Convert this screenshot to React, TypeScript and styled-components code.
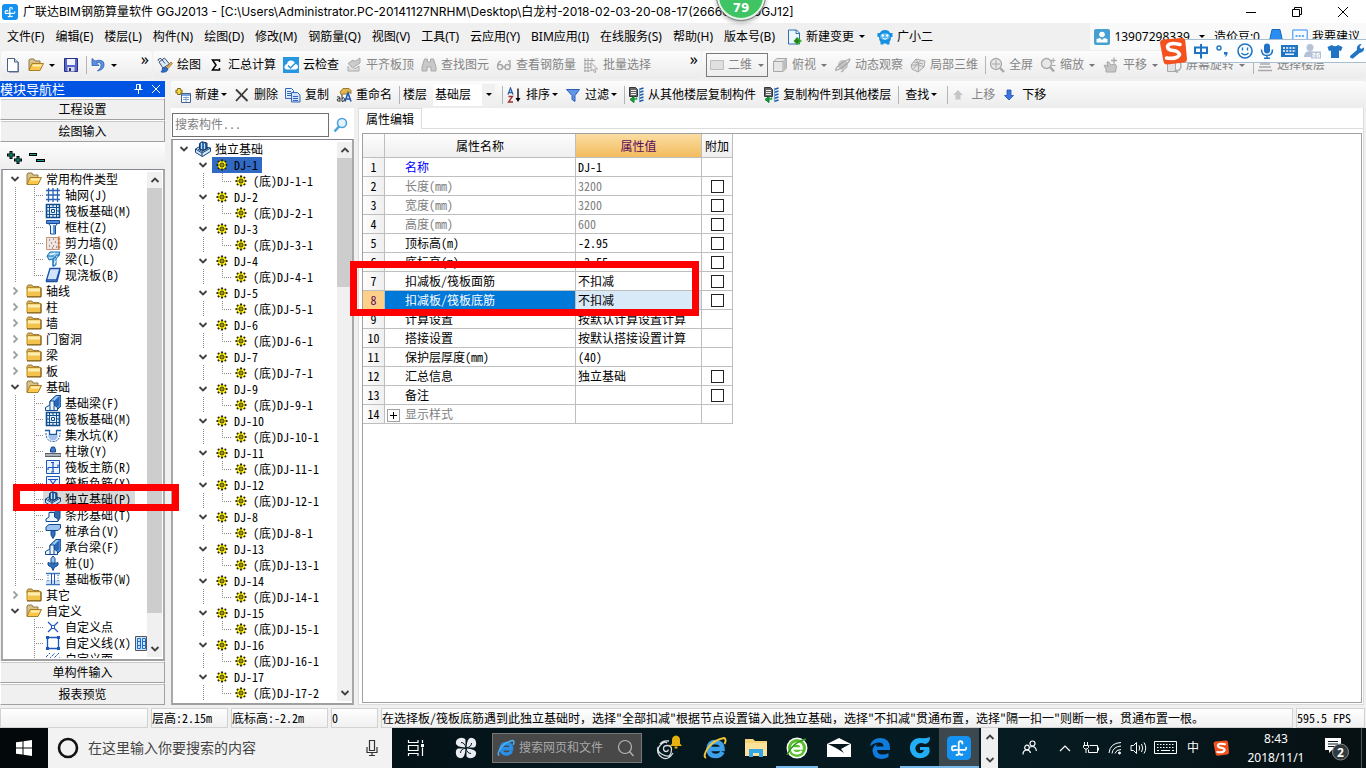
import React from "react";
import styled, { createGlobalStyle, css } from "styled-components";

const ui = `"Noto Sans", "Noto Sans CJK SC", sans-serif`;
const song = `"Noto Sans Mono CJK SC", "Liberation Mono", "Noto Sans CJK SC", monospace`;

const Global = createGlobalStyle`
  * { box-sizing: border-box; }
  body { margin: 0; font: 12px/16px ${ui}; color: #000; background: #f0f0f0; overflow: hidden; }
  button, input, select { font: inherit; color: inherit; }
  button { margin: 0; padding: 0; border: 0; background: none; white-space: nowrap; }
  ul { margin: 0; padding: 0; list-style: none; }
  svg { display: block; flex: none; }
`;

/* ---------- icons ---------- */

const folder = (
  <>
    <path d="M1 3.500 2 2h4l1 1.500h6V6H1z" fill="#d9b45a" stroke="#9c7d3b" />
    <path d="M1 4.500h14v9H1z" fill="#f3c34e" stroke="#b58a2d" />
    <path d="M2 5.500h12v3H2z" fill="#fdeeb4" />
    <path d="M1 14h14V5" stroke="#7a5b1a" fill="none" />
  </>
);
const openFolder = (
  <>
    <path d="M1 13V3l1-1h4l1 2h5v3" fill="#d8c48a" stroke="#8f7b45" />
    <path d="M1 13.500 4 6.500h11.500L12 13.500z" fill="#fbc64a" stroke="#a87f24" />
    <path d="M5 7.500h9l-1 2H4.500z" fill="#fff0b8" />
  </>
);
const beamBlock = (
  <>
    <path d="M5 6 11 .500h5V11l-3 3H5z" fill="#3f86d8" stroke="#12498f" />
    <path d="M9 6 14 1.500V10l-5 4z" fill="#2a68b4" />
    <path d="M6 6 11.500 1H14L9 6z" fill="#a6cdf3" />
    <path d="M.500 15.500v-3L5 10V6h4v4l3.500 2.500v3z" fill="#eaf4fe" stroke="#12498f" />
    <path d="M5 10.500v5M9 10.500v5" stroke="#12498f" />
  </>
);
const raft = (
  <>
    <path d="M1.500 1.500h13v13h-13z" fill="#e9f2fb" stroke="#0f4d8f" strokeWidth="1.600" />
    <path d="M4.500 1v14M11.500 1v14M1 4.500h14M1 11.500h14M8 1v3.500M8 11.500V15M1 8h3.500M11.500 8H15" stroke="#0f4d8f" />
    <path d="M6.500 6.500h3v3h-3z" fill="none" stroke="#0f4d8f" />
  </>
);
const footing = (
  <>
    <path d="M.500 8l5-3 10 2v3.500l-8 5-7-4z" fill="#d2e5f7" stroke="#15457e" />
    <path d="M.500 8l6.500 4 8.500-5M7 12v3.500M3 8l4 2.500 6-3.500" fill="none" stroke="#15457e" />
    <path d="M4.500 2.500 7 .800l5 1.200v5.500L8 9.500 4.500 8z" fill="#2f69ad" stroke="#15325c" />
    <path d="M6.500 2v6M9.500 2.500V8" stroke="#bfe0ff" />
  </>
);
const copyFloor = (
  <>
    <path d="M1.500.500h6l2 2v7h-8z" fill="#666" stroke="#333" />
    <path d="M3 3.500h5M3 5.500h5M3 7.500h5" stroke="#fff" strokeWidth=".9" />
    <path d="M11 2.500 15.500 1M11 5.500 15.500 4M11 8.500 15.500 7M11 11.500l4.500-1.500M11 14.500l4.500-1.500" stroke="#1f5fae" strokeWidth="1.600" />
    <path d="M11.500 2v13" stroke="#6ea6dd" />
    <path d="M6 9.500v6L2 12.500z" fill="#16a33f" stroke="#0c7a2b" />
    <path d="M6 12h2.500v-1.500" stroke="#16a33f" strokeWidth="1.500" fill="none" />
  </>
);
const grey = "#a8a8a8";

const art: Record<string, React.ReactNode> = {
  folder,
  openFolder,
  beamBlock,
  raft,
  footing,
  copyFloor,
  fork: (
    <>
      <rect width="16" height="16" rx="3" fill="#1592f0" />
      <path
        d="M10.300 5Q10.300 3.500 9 3.500T7.800 4.800V11.500Q7.800 13 6.300 12.600M5.800 6.800Q3.200 6.300 3.200 8.200T5 9.300h6.500Q13 9.300 12.800 7.800M10.300 12.300Q9.300 13 8.300 11.800"
        fill="none"
        stroke="#fff"
        strokeWidth="1.200"
        strokeLinecap="round"
      />
    </>
  ),
  doc: (
    <>
      <path d="M2.500 1.500h7l3.500 3.500v9.500H2.500z" fill="#fff" stroke="#4a5f85" />
      <path d="M9.500 1.500V5H13" fill="#cfdcf0" stroke="#4a5f85" />
      <path d="M13.500 5v10H4" fill="none" stroke="#5f7196" />
    </>
  ),
  save: (
    <>
      <path d="M1.500 1.500h13v13h-13z" fill="#5a66c8" stroke="#252f85" />
      <path d="M4 2h8v6H4z" fill="#f1f4ff" />
      <path d="M4.500 10h7v4.500h-7z" fill="#d8dbe8" />
      <path d="M6 11h2v3H6z" fill="#252f85" />
    </>
  ),
  undo: (
    <path d="M2 1.500v7h7L6.500 6Q10 4.500 11 7.500T7.500 14q7-1.500 6.500-7T5 4z" fill="#5b8fe0" stroke="#2a5db5" strokeWidth=".8" />
  ),
  paint: (
    <>
      <path d="M2 5 7.500 1l5 6L6 11z" fill="#dde9f7" stroke="#3b5378" />
      <path d="M1 4q0-3 3-2.500l4 5" fill="none" stroke="#3b5378" />
      <path d="M9 11l5-6 1.500 1.500L10.500 12z" fill="#e9b64b" stroke="#8d641c" strokeWidth=".7" />
      <path d="M5.500 11q4-1.500 5.500 1-1 4-7 3 1.500-1.500 1.500-4z" fill="#2f6fd0" stroke="#183f88" strokeWidth=".7" />
    </>
  ),
  sigma: <path d="M11.500 5V3H4.500L8 8l-3.500 5h7v-2" fill="none" stroke="#000" strokeWidth="1.500" />,
  cloudCheck: (
    <>
      <rect width="16" height="16" fill="#2796e0" />
      <path d="M4 12.500q-3-.5-2.500-3T4 7q.5-3.500 4-3.500T12 7q3 .3 3 2.700t-2.500 2.800z" fill="#fff" />
      <path d="M5 8.500 7.500 11l4.500-4.500" fill="none" stroke="#2796e0" strokeWidth="1.500" />
    </>
  ),
  slab: (
    <>
      <path d="M2 6.500 7 3l2 1.500 5-3.500v5L8 10v2l-2 1v-3z" fill="#ccc" stroke={grey} />
      <path d="M2 9v5h11V9l-4 3" fill="#ddd" stroke={grey} />
    </>
  ),
  binoculars: (
    <path d="M3.500 2h3v3h3V2h3l2.500 8v4h-5v-4h-4v4H1v-4z" fill="#c9c9c9" stroke={grey} />
  ),
  glasses: (
    <g fill="none" stroke={grey} strokeWidth="1.400">
      <circle cx="4" cy="10" r="2.500" />
      <circle cx="11.500" cy="10" r="2.500" />
      <path d="M1.500 9Q2 5 5 4M6.500 10H9M14 10V4h-2" />
    </g>
  ),
  batch: (
    <>
      <path d="M2 1v14M5 1v14M1 3.500h11M1 7h7M1 10.500h7M1 14h6M9 1v4" stroke={grey} fill="none" />
      <path d="M8 5.500 14.500 12l-3 .2L13 15l-1.500.5L10 12.500 8 14z" fill="#f0f0f0" stroke={grey} />
    </>
  ),
  plane: <path d="M1.500 3.500h13v9h-13z" fill="#e0e0e0" stroke="#bdbdbd" />,
  cube: (
    <>
      <path d="M1.500 4.500 5 1.500h9.500v9.500L11 14.500H1.500z" fill="#e6e6e6" stroke={grey} />
      <path d="M1.500 4.500H11v10M11 4.500l3.500-3" fill="none" stroke={grey} />
      <path d="M11.500 5l3-2.500V11l-3 3z" fill="#bdbdbd" />
    </>
  ),
  planet: (
    <>
      <circle cx="8" cy="8" r="5" fill="#c4c4c4" />
      <path d="M1 13.500q-1-2 4-6T14.500 2q1.500 1-3.500 5.500T1 13.500zM6 15l3-2" fill="none" stroke={grey} strokeWidth="1.300" />
    </>
  ),
  wire: (
    <path d="M1 8 6 2l9 2-1 6-6 5-6-3zM6 2l3 6 5 2M1 8l8 0-1 7M4 5l9 2M3.500 11.500 11 3" fill="#e2e2e2" stroke={grey} />
  ),
  fit: (
    <>
      <circle cx="7" cy="7" r="5.500" fill="#e8e8e8" stroke={grey} strokeWidth="1.300" />
      <path d="M7 3v8M3 7h8" stroke={grey} />
      <path d="m11 11 4 4" stroke={grey} strokeWidth="2.400" />
    </>
  ),
  zoom: (
    <>
      <circle cx="6.500" cy="6.500" r="5" fill="#e8e8e8" stroke={grey} strokeWidth="1.300" />
      <path d="m10 10 4 4.500" stroke={grey} strokeWidth="2.400" />
      <path d="M11 3.500h4.500M13.200 1v5M11.500 8.500h4" stroke={grey} />
    </>
  ),
  pan: (
    <>
      <path d="M3 15v-3L1 8.500l2-.5 2 2-1-5h2l1.500 3L12 7l1.500 2-1 6z" fill="#c6c6c6" stroke={grey} />
      <path d="M11 .500v6M8 3.500h6" stroke={grey} strokeWidth="1.300" />
    </>
  ),
  rotate: (
    <>
      <path d="M1.500 1.500h8v13h-8z" fill="#e2e2e2" stroke={grey} />
      <path d="M11 4q4 0 4 5t-6 5l1-2M9 14l3 1.500" fill="none" stroke={grey} strokeWidth="1.400" />
    </>
  ),
  floors: <path d="M4 4h9M3 7h10M2 10h12M1 13.500h14M4 1.500h9" stroke={grey} strokeWidth="1.400" />,
  create: (
    <>
      <path d="M6.500 6.500h9v9h-9z" fill="#fff" stroke="#41618f" />
      <path d="M7 7h8v2H7z" fill="#7ba3dc" />
      <path d="M8 10.500h6M8 12.500h6M11 9.500V15" stroke="#7ba3dc" />
      <path d="M4 1v7M.500 4.500h7" stroke="#7c6500" strokeWidth="3.400" />
      <path d="M4 2v5M1.500 4.500h5" stroke="#f6d64a" strokeWidth="2" />
    </>
  ),
  cross: <path d="M2 2.500 13.500 14M13.500 1.500 2 14" stroke="#3b3b3b" strokeWidth="1.800" />,
  copy: (
    <>
      <path d="M.500 1.500h6l2 2v8h-8z" fill="#e3eeff" stroke="#3565b5" />
      <path d="M2 4.500h4M2 6.500h4M2 8.500h4" stroke="#3565b5" />
      <path d="M6.500 5.500h6l2.500 2.500v7H6.500z" fill="#cfe0fb" stroke="#3565b5" />
      <path d="M8 9.500h5M8 11.500h5M8 13.500h5" stroke="#3565b5" />
    </>
  ),
  rename: (
    <>
      <path d="M4 5 7 1.500h6l2 2v3l-2-1-2 1.500H7L5.500 8z" fill="#e6b54a" stroke="#80611c" strokeWidth=".8" />
      <path d="M9 14.500 12 6l3 8.500M10 12h4" fill="none" stroke="#2359b5" strokeWidth="1.600" />
      <path d="M1 10q3-1 3 1v3.500M4 11.500q-3 0-3 1.500t3 1M6 8v6.500q3 0 2.500-2.500T6 11.500" fill="none" stroke="#333" />
    </>
  ),
  sort: (
    <>
      <path d="M2 7.500 4.500 1 7 7.500M3 5.500h3" fill="none" stroke="#2b62a6" strokeWidth="1.300" />
      <path d="M2.500 9.500H6.500L2.500 15h4.500" fill="none" stroke="#a03030" strokeWidth="1.300" />
      <path d="M12 1.500V13" stroke="#000" strokeWidth="1.300" />
      <path d="M9.500 11h5L12 15z" fill="#000" />
    </>
  ),
  filter: <path d="M1.500 2.500h13L10 8.500v6l-3-2v-4z" fill="#5f97e8" stroke="#2c5eb5" />,
  up: <path d="M7 3 12 8H9.500v4.500h-5V8H2z" fill="#c6c6c6" />,
  down: <path d="M7 13 2.500 8.500h2.500V3h4v5.500h2.500z" fill="#3f74dd" stroke="#2250ae" strokeWidth=".8" />,
  change: (
    <>
      <path d="M2.500 1h8l3 3v11h-11z" fill="#eef6ff" stroke="#2d6fae" />
      <path d="M10 1v3.500h3.500" fill="none" stroke="#2d6fae" />
      <path d="M11 8l5 4-5 4-3.500-4z" fill="#3aae2a" />
      <path d="M11 9.500v5M8.500 12h5" stroke="#1e7c15" strokeWidth="1.500" />
    </>
  ),
  mascot: (
    <>
      <path d="M3 4q1-3 5-3t5 3h2.500v4H14q0 3-1.500 5v2.500h-3v-1h-3v1h-3V13Q2 11 2 8H.500V4z" fill="#1590e0" />
      <ellipse cx="8" cy="7.500" rx="5" ry="3.500" fill="#59b8f2" />
      <circle cx="5.800" cy="6.500" r="1.300" fill="#fff" />
      <circle cx="10.200" cy="6.500" r="1.300" fill="#fff" />
      <path d="M5.500 9q2.500 2.500 5 0" stroke="#fff" fill="none" />
    </>
  ),
  user: (
    <>
      <rect width="16" height="16" rx="2" fill="#46a0d2" />
      <circle cx="8" cy="5.500" r="2.800" fill="#fff" />
      <path d="M2.500 13.500V10L6 9l2 2 2-2 3.500 1v3.500z" fill="#fff" />
    </>
  ),
  bell: <path d="M4 .500h8l2 9 1.500 3H.500l1.500-3z" fill="#2b8df2" stroke="#1668bb" />,
  chat: (
    <>
      <path d="M.800 1h14.400v12H.800z" fill="#f7fbff" stroke="#2b8df2" />
      <path d="M3.500 7h9" stroke="#2b8df2" strokeWidth="1.600" strokeDasharray="2 1.200" />
    </>
  ),
  grid: <path d="M3.500 1v14M8 1v14M12.500 1v14M1 3.500h14M1 8h14M1 12.500h14" stroke="#2c62b8" strokeWidth="1.300" />,
  column: (
    <>
      <path d="M1.500 1.500h13v3h-13z" fill="#4f8ddc" stroke="#164b99" />
      <path d="M3.500 4.500h9l-2 2.500v8h-5V7z" fill="#eaf4fe" stroke="#164b99" />
      <path d="M9 6v9" stroke="#5d97dd" strokeWidth="2" />
    </>
  ),
  wall: (
    <>
      <path d="M1.500 2.500h12v12h-12z" fill="#eee3df" stroke="#c9947a" />
      <path d="M4 5h1M8 4h1M6 8h1M10 7h1M4 11h1M8 11h1M11 12h1M7 13h1" stroke="#555" strokeWidth="1.200" />
      <path d="M14 1v14M12.500 4h3M12.500 8h3M12.500 12h3" stroke="#c96a2a" />
    </>
  ),
  beam: (
    <>
      <path d="M2 5 5 1h10l-1.500 4-2.500 3v6l-3 1.500V8L4 9z" fill="#9fd2f2" stroke="#1470b8" />
      <path d="M8 8l3.500-4H15M8 15V8l3-2M2 5h7" fill="none" stroke="#1470b8" />
      <path d="M5 4l5-2M9 13l2-3" stroke="#fff" />
    </>
  ),
  castSlab: (
    <>
      <path d="M5 1.500h10L11.500 13H1.500z" fill="#cfe4fb" stroke="#1a4fa8" strokeWidth="1.300" />
      <path d="M1.500 13v1.500h10.500L15 3" fill="none" stroke="#1a4fa8" strokeWidth="1.300" />
    </>
  ),
  pit: (
    <>
      <path d="M1 6q0 8.500 7 8.500T15 6" fill="none" stroke="#1d58a8" strokeDasharray="2 1" />
      <path d="M3 8.500h10q-1 5-5 5t-5-5z" fill="#9fc3ea" />
      <path d="M0 3.500h4.500v4h7v-4H16" fill="none" stroke="#1d58a8" strokeWidth="1.300" />
    </>
  ),
  pier: (
    <>
      <path d="M5.500 9V7l1-3h3l1 3v2z" fill="#3f7cd0" stroke="#17458c" />
      <path d="M0 10.500h16v3H0z" fill="#a9b1ba" stroke="#596069" />
    </>
  ),
  mainBar: (
    <>
      <path d="M1.500 1.500h13v13h-13z" fill="#eaf3fd" stroke="#1c55bb" />
      <path d="M8 3v10.500M3 8.500V11M3 8.500h10V5.500M6 3.500h3M6 13h3" fill="none" stroke="#1c55bb" strokeWidth="1.200" />
    </>
  ),
  negBar: (
    <>
      <path d="M1.500 1.500h13v13h-13z" fill="#eaf3fd" stroke="#1c55bb" />
      <path d="M3 4.500h10M5 4.500 8 9l3-4.500M8 9v5" fill="none" stroke="#1c55bb" strokeWidth="1.200" />
    </>
  ),
  strip: (
    <>
      <path d="M5 5.500 8 2h7v9l-2 3z" fill="#2f69ad" stroke="#12498f" />
      <path d="M1 14.500V12l3-2V5.500h5.500V10l3.500 2v2.500z" fill="#eaf4fe" stroke="#12498f" />
      <path d="M4.500 5 8 2.500h3L9.500 5z" fill="#a6cdf3" />
    </>
  ),
  cap: (
    <>
      <path d="M1 4l3-2.500h11.500V5L13 7.500H1z" fill="#9cc4ee" stroke="#12498f" />
      <path d="M6 7.500h4V12l-2 3.500L6 12z" fill="#2f6fc0" stroke="#12498f" />
    </>
  ),
  pile: (
    <>
      <path d="M6 3.500 8 1l2 2.500V8h-4z" fill="#9cc4ee" stroke="#12498f" />
      <path d="M3 7.500q5 3 10 0v2.500q-2 2-3.500 2L8 15.500 6.500 12Q5 12 3 10z" fill="#2f6fc0" stroke="#12498f" />
    </>
  ),
  band: (
    <>
      <path d="M1 2.500h14M1 13.500h14" stroke="#3f74b8" strokeWidth="1.600" />
      <path d="M1 9h14v3.500H1z" fill="#c9def4" />
      <path d="M6.500 3v10M9.500 3v10" stroke="#1c55bb" />
      <path d="M3 4v7M13 4v7" stroke="#1c55bb" strokeDasharray="1 1.500" />
    </>
  ),
  point: (
    <>
      <path d="M3 3l10 10M13 3 3 13" stroke="#1c55bb" strokeWidth="1.200" />
      <path d="M6.500 6.500h3v3h-3z" fill="#fff" stroke="#1c55bb" />
    </>
  ),
  poly: (
    <>
      <path d="M2.500 2.500h11v11h-11z" fill="none" stroke="#1c55bb" strokeWidth="1.300" />
      <path d="M1 1h3v3H1zM12 1h3v3h-3zM1 12h3v3H1zM12 12h3v3h-3z" fill="#1c55bb" />
    </>
  ),
  hatch: <path d="M1 6l4-4M1 11l9-9M1 15 14 2M6 15l9-9M11 15l4-4" stroke="#1c55bb" strokeDasharray="3 1" />,
  gear: (
    <>
      <path d="M8 2.500v11M2.500 8h11M4 4l8 8M12 4l-8 8" stroke="#2f2b00" strokeWidth="2.200" />
      <circle cx="8" cy="8" r="4" fill="#fff200" />
      <path d="M8 3v10M3 8h10" stroke="#2f2b00" strokeWidth=".8" strokeDasharray="2 6" />
      <circle cx="8" cy="8" r="2" fill="none" stroke="#222" />
      <circle cx="8" cy="8" r=".8" fill="#222" />
    </>
  ),
  search: (
    <>
      <circle cx="9" cy="6" r="4.500" fill="#e3f3fd" stroke="#4da3d8" strokeWidth="1.600" />
      <path d="M6 9.500 1.500 14.500" stroke="#4da3d8" strokeWidth="2.600" />
    </>
  ),
};

type IconProps = { name: string; size?: number };
const Icon = ({ name, size = 16 }: IconProps) => (
  <svg width={size} height={size} viewBox="0 0 16 16" fill="none" aria-hidden="true">
    {art[name]}
  </svg>
);

/* ---------- frame ---------- */

const Shell = styled.div`
  display: flex;
  flex-direction: column;
  height: 100vh;
  position: relative;
  overflow: hidden;
`;

const TitleBar = styled.header`
  display: flex;
  align-items: center;
  height: 23px;
  flex: none;
  padding-left: 2px;
  gap: 5px;
  background: #fff;
  h1 { margin: 0; flex: 1; font: 400 12px/16px Inter, ${ui}; white-space: nowrap; }
`;
const WindowButtons = styled.div`
  display: flex;
`;
const WindowButton = styled.button`
  width: 46px;
  height: 23px;
  display: grid;
  place-items: center;
`;

const MenuBar = styled.nav`
  display: flex;
  align-items: center;
  height: 27px;
  flex: none;
  padding-left: 7px;
  gap: 11px;
  background: #f0f0f0;
`;
const MenuButton = styled.button`
  display: flex;
  align-items: center;
  gap: 4px;
`;
const Account = styled.div`
  display: flex;
  align-items: center;
  gap: 8px;
  height: 27px;
  margin-left: auto;
  padding: 0 6px 0 4px;
  background: #f9f9f9;
`;

const Caret = styled.i<{ $dim?: boolean }>`
  width: 0;
  height: 0;
  margin: 0 1px;
  border: 3px solid transparent;
  border-top-color: ${(p) => (p.$dim ? "#777" : "#000")};
  border-bottom-width: 0;
`;
const ToolBand = styled.div<{ $grow?: boolean; $tight?: boolean; $w?: number }>`
  display: flex;
  align-items: center;
  width: ${(p) => (p.$w ? `${p.$w}px` : "auto")};
  height: ${(p) => (p.$tight ? 27 : 28)}px;
  gap: 7px;
  padding-left: 4px;
  flex: ${(p) => (p.$grow ? "1" : "none")};
  min-width: 0;
  border-radius: 3px;
  background: linear-gradient(#fcfcfc, #ececec);
  ${Caret} { margin: ${(p) => (p.$tight ? "0 0 0 -2px" : "0 1px")}; }
`;
const ToolRow = styled.div`
  display: flex;
  height: 31px;
  flex: none;
  padding: 1px 0 2px 1px;
  gap: 1px;
`;
const ToolButton = styled.button<{ $dim?: boolean; $bare?: boolean }>`
  display: flex;
  align-items: center;
  gap: 4px;
  flex: none;
  padding: 0 ${(p) => (p.$bare ? 3 : 0)}px;
  color: ${(p) => (p.$dim ? "#858585" : "#000")};
`;
const Rule = styled.span`
  width: 1px;
  height: 18px;
  background: #b5b5b5;
  flex: none;
  margin-right: -4px;
`;
const More = styled.button`
  align-self: flex-start;
  margin: 0 3px 0 auto;
  font-size: 16px;
  line-height: 16px;
`;
const ViewMode = styled.label`
  display: flex;
  align-items: center;
  gap: 3px;
  width: 62px;
  height: 24px;
  padding: 0 2px;
  border: 1px solid #7a7a7a;
  color: #858585;
  margin-right: -3px;
  flex: none;
`;
const PlainSelect = styled.select`
  appearance: none;
  border: 0;
  padding: 0;
  margin: 0;
  background: transparent;
  flex: 1;
  min-width: 0;
  outline: 0;
`;
const FloorSelect = styled.label`
  display: flex;
  align-items: center;
  gap: 6px;
  flex: none;
`;
const FloorBox = styled.span`
  display: flex;
  align-items: center;
  width: 62px;
  height: 22px;
  padding: 0 3px 0 2px;
  background: linear-gradient(90deg, #fff 49px, #f0f0f0 49px);
`;

/* ---------- body ---------- */

const Body = styled.div`
  display: flex;
  flex: 1;
  min-height: 0;
`;
const NavPanel = styled.aside`
  display: flex;
  flex-direction: column;
  width: 165px;
  flex: none;
  position: relative;
  font-family: ${song};
`;
const NavTitle = styled.div`
  display: flex;
  align-items: center;
  height: 16px;
  margin-bottom: 1px;
  background: #0054e3;
  color: #fff;
  span { flex: 1; font-size: 13px; }
  button { width: 18px; display: grid; place-items: center; }
`;
const NavSection = styled.button`
  height: 22px;
  flex: none;
  border: 1px solid #a0a0a0;
  border-top-color: #fff;
  border-left-color: #fff;
  box-shadow: inset 0 1px #c8c8c8;
  background: #f0f0f0;
`;
const NavTools = styled.div`
  display: flex;
  height: 27px;
  padding: 5px 0 0 6px;
  gap: 5px;
  flex: none;
  background: linear-gradient(#fdfdfd, #eee);
`;
const TreeBox = styled.div<{ $inset?: boolean }>`
  display: flex;
  flex: 1;
  min-height: 0;
  margin-left: ${(p) => (p.$inset ? 1 : 0)}px;
  padding: 1px ${(p) => (p.$inset ? 1 : 0)}px 1px ${(p) => (p.$inset ? 2 : 1)}px;
  border: 1px solid #828790;
  border-width: 1px 2px 2px;
  border-color: #828790 #a8a8a8 #a0a0a0 #a8a8a8;
  background: #fff;
  overflow: hidden;
`;
const TreeList = styled.ul`
  flex: 1;
  min-width: 0;
  overflow: hidden;
`;
const TreeItem = styled.li`
  display: flex;
  height: 16px;
  white-space: nowrap;
`;
const dots = "#8a8a8a";
const Guide = styled.span<{ $kind: "none" | "line" | "branch" | "last" }>`
  width: 19px;
  height: 16px;
  flex: none;
  background-repeat: no-repeat;
  ${(p) =>
    p.$kind !== "none" &&
    css`
      background-image: repeating-linear-gradient(${dots} 0 1px, transparent 1px 2px)
        ${p.$kind !== "line" && `, repeating-linear-gradient(90deg, ${dots} 0 1px, transparent 1px 2px)`};
      background-size: 1px ${p.$kind === "last" ? "8px" : "16px"}, 10px 1px;
      background-position: 10px 0, 10px 8px;
    `}
`;
const Toggle = styled.button`
  width: 19px;
  height: 16px;
  display: grid;
  place-items: center;
  flex: none;
`;
const Node = styled.button<{ $look?: "selected" | "current" }>`
  display: flex;
  align-items: center;
  gap: 4px;
  height: 16px;
  padding: 0 4px 0 2px;
  background: ${(p) => (p.$look === "selected" ? "#316ac5" : p.$look === "current" ? "#d9d9d9" : "none")};
`;
const ScrollTrack = styled.div`
  display: flex;
  flex-direction: column;
  width: 15px;
  margin: 1px 0;
  flex: none;
  background: #f0f0f0;
  button { height: 16px; display: grid; place-items: center; flex: none; }
`;
const Thumb = styled.div<{ $size: number }>`
  flex: ${(p) => p.$size};
  background: #cdcdcd;
`;
const Rest = styled.div<{ $size: number }>`
  flex: ${(p) => p.$size};
`;

const Work = styled.div`
  display: flex;
  flex-direction: column;
  flex: 1;
  min-width: 0;
  margin-left: 6px;
`;
const WorkBody = styled.div`
  display: flex;
  flex: 1;
  min-height: 0;
`;
const ListPanel = styled.section`
  display: flex;
  flex-direction: column;
  width: 183px;
  flex: none;
  font-family: ${song};
`;
const SearchRow = styled.form`
  display: flex;
  height: 31px;
  padding: 5px 2px 2px 1px;
  background: #fff;
  gap: 4px;
  flex: none;
  input {
    width: 157px;
    border: 1px solid #707070;
    padding: 0 2px 3px;
    outline: 0;
    &::placeholder { color: #808080; opacity: 1; }
  }
  button { width: 16px; display: grid; place-items: center; }
`;
const Editor = styled.main`
  display: flex;
  flex-direction: column;
  flex: 1;
  min-width: 0;
  margin: 0 2px 0 4px;
  background: #fff;
  border: 1px solid #dcdcdc;
  border-top: 0;
  font-family: ${song};
`;
const TabStrip = styled.div`
  display: flex;
  height: 21px;
  flex: none;
  &::after { content: ""; flex: 1; border-bottom: 1px solid #dcdcdc; background: #fff; }
`;
const Tab = styled.button`
  width: 63px;
  border: 1px solid #dcdcdc;
  border-bottom: 0;
  border-left: 0;
  background: #fff;
`;
const SheetFrame = styled.div`
  flex: 1;
  min-height: 0;
  margin: 4px 1px 1px 3px;
  border: 1px solid #a0a0a0;
  position: relative;
`;
const Sheet = styled.table`
  width: 370px;
  table-layout: fixed;
  border-collapse: separate;
  border-spacing: 0;
  th, td {
    height: 19px;
    padding: 0;
    line-height: 16px;
    font-weight: 400;
    text-align: left;
    white-space: nowrap;
    border: 0 solid #bebebe;
    border-width: 0 1px 1px 0;
  }
  thead th { height: 24px; text-align: center; background: linear-gradient(#fdfdfd, #efefef); }
  thead th.value { background: linear-gradient(#fbdda2, #f2bc5e); color: #5c0a5c; }
`;
const Col = styled.col<{ $w: number }>`
  width: ${(p) => p.$w}px;
`;
const RowHead = styled.th<{ $on?: boolean }>`
  && {
    text-align: center;
    background: ${(p) => (p.$on ? "#fdd08a" : "linear-gradient(90deg, #fdfdfd, #efefef)")};
    color: ${(p) => (p.$on ? "#5c0a5c" : "#000")};
  }
`;
const nameTones: Record<string, string> = { key: "#00f", dim: "#808080", group: "#808080", on: "#fff" };
const NameCell = styled.td<{ $tone: string }>`
  && {
    padding-left: ${(p) => (p.$tone === "group" ? 2 : 20)}px;
    color: ${(p) => nameTones[p.$tone] ?? "#000"};
    background: ${(p) => (p.$tone === "on" ? "#0078d7" : "#fff")};
  }
`;
const ValueCell = styled.td<{ $tone: string }>`
  && {
    padding-left: 2px;
    color: ${(p) => (p.$tone === "dim" ? "#808080" : "#000")};
    background: ${(p) => (p.$tone === "on" ? "#d8e9f8" : "#fff")};
  }
`;
const Expand = styled.button`
  width: 13px;
  height: 13px;
  margin-right: 5px;
  border: 1px solid #a0a0a0;
  color: #000;
  display: inline-grid;
  place-items: center;
  vertical-align: middle;
`;
const Check = styled.input`
  appearance: none;
  display: block;
  width: 13px;
  height: 13px;
  margin: 0 auto;
  border: 1px solid #222;
  background: #fff;
`;
const Mark = styled.div<{ $x: number; $y: number; $w: number; $h: number }>`
  position: absolute;
  left: ${(p) => p.$x}px;
  top: ${(p) => p.$y}px;
  width: ${(p) => p.$w}px;
  height: ${(p) => p.$h}px;
  border: 7px solid #f00;
  pointer-events: none;
  z-index: 2;
`;

const StatusBar = styled.footer`
  display: flex;
  gap: 3px;
  height: 23px;
  flex: none;
  padding: 3px 1px 0 0;
  font-family: ${song};
`;
const StatusCell = styled.div<{ $w?: number }>`
  ${(p) => (p.$w ? `width: ${p.$w}px; flex: none;` : "flex: 1; min-width: 0;")}
  height: 20px;
  padding: 1px 0;
  border: 1px solid #d2d2d2;
  background: linear-gradient(#fff, #f0f0f0);
  white-space: nowrap;
  overflow: hidden;
`;

/* ---------- overlays ---------- */

const Ball = styled.div`
  position: absolute;
  left: 717px;
  top: -28px;
  width: 48px;
  height: 48px;
  padding-top: 24px;
  border: 2px solid #e8f5ea;
  outline: 1px solid #7d8b80;
  border-radius: 50%;
  background: #3fc463;
  box-shadow: 0 2px 5px #0006;
  color: #fff;
  font: 700 12px/20px "DejaVu Sans", sans-serif;
  text-align: center;
`;
const ImeBar = styled.div`
  position: absolute;
  right: 0;
  top: 38px;
  display: flex;
  align-items: center;
  gap: 6px;
  width: 206px;
  height: 26px;
  padding-left: 33px;
  &::before {
    content: "";
    position: absolute;
    inset: 1px 0 1px 18px;
    border: 1px solid #a9bfd0;
    border-right: 0;
    background: #fdfeff;
  }
  > * { position: relative; }
  > svg:first-child { position: absolute; left: -1px; top: -1px; }
`;

/* ---------- taskbar ---------- */

const Taskbar = styled.footer`
  display: flex;
  align-items: center;
  height: 40px;
  flex: none;
  color: #fff;
  background: linear-gradient(90deg, #02080b, #04161c 40%, #061c22 75%, #071013);
  overflow: hidden;
`;
const Start = styled.button`
  width: 48px;
  height: 40px;
  display: grid;
  place-items: center;
  background: #03080a;
`;
const Cortana = styled.label`
  display: flex;
  align-items: center;
  gap: 9px;
  width: 344px;
  height: 40px;
  padding: 0 12px 0 9px;
  background: #f2f2f2;
  color: #444;
  input {
    flex: 1;
    min-width: 0;
    border: 0;
    padding: 0;
    outline: 0;
    background: none;
    font-size: 14px;
    &::placeholder { color: #444; opacity: 1; }
  }
`;
const TaskButton = styled.button<{ $w: number; $state?: "active" | "running" }>`
  width: ${(p) => p.$w}px;
  height: 40px;
  flex: none;
  display: grid;
  place-items: center;
  background: ${(p) => (p.$state === "active" ? "#3c474e" : "none")};
  box-shadow: ${(p) => (p.$state ? "inset 0 -2px #76b9ed" : "none")};
`;
const WebSearch = styled.label`
  display: flex;
  align-items: center;
  gap: 4px;
  width: 150px;
  height: 30px;
  margin-right: 2px;
  padding: 0 6px 0 4px;
  border: 1px solid #777;
  background: #484848;
  input {
    flex: 1;
    min-width: 0;
    border: 0;
    padding: 0;
    outline: 0;
    background: none;
    &::placeholder { color: #a8a8a8; opacity: 1; }
  }
`;
const TaskScroll = styled.div`
  display: flex;
  flex-direction: column;
  justify-content: space-between;
  width: 17px;
  height: 40px;
  margin: 0 auto 0 2px;
  background: #f0f0f0;
  button { height: 17px; display: grid; place-items: center; }
`;
const Clock = styled.div`
  width: 74px;
  margin-right: 12px;
  font-size: 12px;
  line-height: 19px;
  text-align: center;
`;
const ShowDesktop = styled.button`
  width: 5px;
  height: 40px;
  margin-left: 12px;
  border-left: 1px solid #555;
`;

/* ---------- pieces ---------- */

const chevrons = { down: "M1.500 3 5 6.500 8.500 3", up: "M1.500 7 5 3.500 8.500 7", right: "M3.500 1.500 7 5 3.500 8.500" };
const Chevron = ({ dir = "down", tone = "#404040" }: { dir?: keyof typeof chevrons; tone?: string }) => (
  <svg width="10" height="10" viewBox="0 0 10 10" fill="none" aria-hidden="true">
    <path d={chevrons[dir]} stroke={tone} strokeWidth="1.800" />
  </svg>
);

const Tool = ({ icon, text, dim, menu }: { icon?: string; text?: string; dim?: boolean; menu?: boolean }) => (
  <ToolButton $dim={dim} $bare={!icon} aria-label={text ?? icon}>
    {icon && <Icon name={icon} />}
    {text}
    {menu && <Caret $dim={dim} />}
  </ToolButton>
);

const Scroll = ({ thumb, after }: { thumb: number; after: number }) => (
  <ScrollTrack>
    <button aria-label="向上滚动"><Chevron dir="up" /></button>
    <Thumb $size={thumb} />
    <Rest $size={after} />
    <button aria-label="向下滚动"><Chevron /></button>
  </ScrollTrack>
);

const menus = ["文件(F)", "编辑(E)", "楼层(L)", "构件(N)", "绘图(D)", "修改(M)", "钢筋量(Q)", "视图(V)", "工具(T)", "云应用(Y)", "BIM应用(I)", "在线服务(S)", "帮助(H)", "版本号(B)"];

type Group = { name: string; open?: boolean; last?: boolean; items?: [string, string][] };
const groups: Group[] = [
  {
    name: "常用构件类型",
    open: true,
    items: [["grid", "轴网(J)"], ["raft", "筏板基础(M)"], ["column", "框柱(Z)"], ["wall", "剪力墙(Q)"], ["beam", "梁(L)"], ["castSlab", "现浇板(B)"]],
  },
  { name: "轴线" },
  { name: "柱" },
  { name: "墙" },
  { name: "门窗洞" },
  { name: "梁" },
  { name: "板" },
  {
    name: "基础",
    open: true,
    items: [
      ["beamBlock", "基础梁(F)"], ["raft", "筏板基础(M)"], ["pit", "集水坑(K)"], ["pier", "柱墩(Y)"], ["mainBar", "筏板主筋(R)"], ["negBar", "筏板负筋(X)"],
      ["footing", "独立基础(P)"], ["strip", "条形基础(T)"], ["cap", "桩承台(V)"], ["beamBlock", "承台梁(F)"], ["pile", "桩(U)"], ["band", "基础板带(W)"],
    ],
  },
  { name: "其它" },
  { name: "自定义", open: true, last: true, items: [["point", "自定义点"], ["poly", "自定义线(X)"], ["hatch", "自定义面"]] },
];

const footings = [1, 2, 3, 4, 5, 6, 7, 9, 10, 11, 12, 8, 13, 14, 15, 16, 17];

type Prop = { name: string; value: string; tone?: string; check?: boolean };
const props: Prop[] = [
  { name: "名称", value: "DJ-1", tone: "key" },
  { name: "长度(mm)", value: "3200", tone: "dim", check: true },
  { name: "宽度(mm)", value: "3200", tone: "dim", check: true },
  { name: "高度(mm)", value: "600", tone: "dim", check: true },
  { name: "顶标高(m)", value: "-2.95", check: true },
  { name: "底标高(m)", value: "-3.55", check: true },
  { name: "扣减板/筏板面筋", value: "不扣减", check: true },
  { name: "扣减板/筏板底筋", value: "不扣减", tone: "on", check: true },
  { name: "计算设置", value: "按默认计算设置计算" },
  { name: "搭接设置", value: "按默认搭接设置计算" },
  { name: "保护层厚度(mm)", value: "(40)" },
  { name: "汇总信息", value: "独立基础", check: true },
  { name: "备注", value: "", check: true },
  { name: "显示样式", value: "", tone: "group" },
];

const NavTree = () => (
  <TreeBox $inset>
    <TreeList>
      {groups.map((g) => (
        <React.Fragment key={g.name}>
          <TreeItem>
            <Toggle aria-label={g.name}>
              <Chevron dir={g.open ? "down" : "right"} tone={g.open ? "#404040" : "#a0a0a0"} />
            </Toggle>
            <Node><Icon name={g.open ? "openFolder" : "folder"} />{g.name}</Node>
          </TreeItem>
          {g.items?.map(([icon, text], i) => (
            <TreeItem key={text}>
              <Guide $kind={g.last ? "none" : "line"} />
              <Guide $kind={!g.last && i === g.items!.length - 1 ? "last" : "branch"} />
              <Node $look={text === "独立基础(P)" ? "current" : undefined}>
                <Icon name={icon} />
                {text}
                {text === "自定义线(X)" && (
                  <svg width="12" height="15" viewBox="0 0 12 15" fill="none" aria-hidden="true">
                    <path d="M.500.500h11v14H.500z" fill="#cfe5fb" stroke="#555" />
                    <path d="M2.500 2.500h3v10h-3zM7.500 2.500h3v10h-3zM2.500 5.500h3M2.500 9.500h3M7.500 5.500h3M7.500 9.500h3" stroke="#1c6fd0" />
                  </svg>
                )}
              </Node>
            </TreeItem>
          ))}
        </React.Fragment>
      ))}
    </TreeList>
    <Scroll thumb={425} after={28} />
  </TreeBox>
);

const ComponentTree = () => (
  <TreeBox>
    <TreeList>
      <TreeItem>
        <Toggle aria-label="独立基础"><Chevron /></Toggle>
        <Node><Icon name="footing" />独立基础</Node>
      </TreeItem>
      {footings.map((n, i) => (
        <React.Fragment key={n}>
          <TreeItem>
            <Guide $kind="none" />
            <Toggle aria-label={`DJ-${n}`}><Chevron /></Toggle>
            <Node $look={i === 0 ? "selected" : undefined}><Icon name="gear" />{`DJ-${n}`}</Node>
          </TreeItem>
          <TreeItem>
            <Guide $kind="none" />
            <Guide $kind="line" />
            <Guide $kind="last" />
            <Node><Icon name="gear" />{`(底)DJ-${n}-${n === 17 ? 2 : 1}`}</Node>
          </TreeItem>
        </React.Fragment>
      ))}
    </TreeList>
    <Scroll thumb={129} after={400} />
  </TreeBox>
);

const Sogou = ({ size }: { size: number }) => (
  <svg width={size} height={size} viewBox="0 0 28 28" fill="none" aria-hidden="true">
    <path d="M4 2.500 23 1q3 0 3.300 3L28 22q0 3-3 3.500L8 27.500q-3 0-3.500-3L1 6q0-3 3-3.500z" fill="#f4511e" />
    <path d="M21 7.500Q10 5 8.500 9.500 8.500 13 14 13.500t6.500 4q-2 5-13 3.500" stroke="#fff" strokeWidth="3.600" strokeLinecap="round" />
  </svg>
);

const IeMark = ({ size, ring = "#f3c53a", tone = "#3fa0ea" }: { size: number; ring?: string; tone?: string }) => (
  <svg width={size} height={size} viewBox="0 0 24 24" fill="none" aria-hidden="true">
    <path d="M19.500 16Q17.500 20 12.500 20 6 20 5.500 13 6 6 12.500 6q7 .5 7 7H7" stroke={tone} strokeWidth="4.600" />
    <path d="M3 22Q-.5 20 5 12T21 2q3 1 .5 6" stroke={ring} strokeWidth="1.900" />
  </svg>
);

export default function App() {
  return (
    <Shell>
      <Global />
      <TitleBar>
        <Icon name="fork" />
        <h1>广联达BIM钢筋算量软件 GGJ2013 - [C:\Users\Administrator.PC-20141127NRHM\Desktop\白龙村-2018-02-03-20-08-17(2666666).GGJ12]</h1>
        <WindowButtons>
          <WindowButton aria-label="最小化">
            <svg width="10" height="10" viewBox="0 0 10 10"><path d="M0 5.500h10" stroke="#000" /></svg>
          </WindowButton>
          <WindowButton aria-label="还原">
            <svg width="10" height="10" viewBox="0 0 10 10" fill="none"><path d="M.500 2.500h7v7h-7zM2.500 2.500v-2h7v7h-2" stroke="#000" /></svg>
          </WindowButton>
          <WindowButton aria-label="关闭">
            <svg width="10" height="10" viewBox="0 0 10 10"><path d="m0 0 10 10M10 0 0 10" stroke="#000" /></svg>
          </WindowButton>
        </WindowButtons>
      </TitleBar>

      <MenuBar>
        {menus.map((m) => <MenuButton key={m}>{m}</MenuButton>)}
        <MenuButton><Icon name="change" />新建变更 <Caret /></MenuButton>
        <MenuButton><Icon name="mascot" />广小二</MenuButton>
        <Account>
          <MenuButton><Icon name="user" />13907298339</MenuButton>
          <Caret />
          <MenuButton>造价豆:0</MenuButton>
          <MenuButton aria-label="消息"><Icon name="bell" /></MenuButton>
          <MenuButton><Icon name="chat" />我要建议</MenuButton>
        </Account>
      </MenuBar>

      <ToolRow>
        <ToolBand $w={151}>
          <Tool icon="doc" />
          <Tool icon="openFolder" menu />
          <Tool icon="save" />
          <Rule />
          <Tool icon="undo" menu />
          <More>»</More>
        </ToolBand>
        <ToolBand $w={548}>
          <Tool icon="paint" text="绘图" />
          <Tool icon="sigma" text="汇总计算" />
          <Tool icon="cloudCheck" text="云检查" />
          <Tool icon="slab" text="平齐板顶" dim />
          <Tool icon="binoculars" text="查找图元" dim />
          <Tool icon="glasses" text="查看钢筋量" dim />
          <Tool icon="batch" text="批量选择" dim />
          <More>»</More>
        </ToolBand>
        <ToolBand $grow>
          <ViewMode>
            <Icon name="plane" />
            <PlainSelect aria-label="视图模式"><option>二维</option></PlainSelect>
            <Caret $dim />
          </ViewMode>
          <Tool icon="cube" text="俯视" dim menu />
          <Tool icon="planet" text="动态观察" dim />
          <Tool icon="wire" text="局部三维" dim />
          <Rule />
          <Tool icon="fit" text="全屏" dim />
          <Tool icon="zoom" text="缩放" dim menu />
          <Tool icon="pan" text="平移" dim menu />
          <Tool icon="rotate" text="屏幕旋转" dim menu />
          <Rule />
          <Tool icon="floors" text="选择楼层" dim />
        </ToolBand>
      </ToolRow>

      <Body>
        <NavPanel>
          <NavTitle>
            <span>模块导航栏</span>
            <button aria-label="固定">
              <svg width="9" height="10" viewBox="0 0 9 10" fill="none"><path d="M2.500.500h4v5M5.500.500v5M2.500.500v5M.500 5.500h8M4.500 5.500V10" stroke="#fff" /></svg>
            </button>
            <button aria-label="关闭">
              <svg width="8" height="8" viewBox="0 0 8 8"><path d="m0 0 8 8M8 0 0 8" stroke="#fff" /></svg>
            </button>
          </NavTitle>
          <NavSection>工程设置</NavSection>
          <NavSection>绘图输入</NavSection>
          <NavTools>
            <button aria-label="全部展开">
              <svg width="17" height="16" viewBox="0 0 17 16">
                <path d="M5 1v8M1 5h8M12 6v8M8 10h8" stroke="#000" strokeWidth="3" />
                <path d="M5 2v6M2 5h6M12 7v6M9 10h6" stroke="#16a08c" />
              </svg>
            </button>
            <button aria-label="全部折叠">
              <svg width="17" height="16" viewBox="0 0 17 16">
                <path d="M1 4.500h8M8 10.500h9" stroke="#000" strokeWidth="3" />
                <path d="M2 4.500h6M9 10.500h7" stroke="#16a08c" />
              </svg>
            </button>
          </NavTools>
          <NavTree />
          <NavSection>单构件输入</NavSection>
          <NavSection>报表预览</NavSection>
          <Mark $x={13} $y={403} $w={166} $h={27} />
        </NavPanel>

        <Work>
          <ToolBand $tight>
            <Tool icon="create" text="新建" menu />
            <Tool icon="cross" text="删除" />
            <Tool icon="copy" text="复制" />
            <Tool icon="rename" text="重命名" />
            <Rule />
            <FloorSelect>
              楼层
              <FloorBox>
                <PlainSelect><option>基础层</option></PlainSelect>
                <Caret />
              </FloorBox>
            </FloorSelect>
            <Rule />
            <Tool icon="sort" text="排序" menu />
            <Tool icon="filter" text="过滤" menu />
            <Rule />
            <Tool icon="copyFloor" text="从其他楼层复制构件" />
            <Tool icon="copyFloor" text="复制构件到其他楼层" />
            <Rule />
            <Tool text="查找" menu />
            <Rule />
            <Tool icon="up" text="上移" dim />
            <Tool icon="down" text="下移" />
          </ToolBand>
          <WorkBody>
            <ListPanel>
              <SearchRow>
                <input aria-label="搜索构件" placeholder="搜索构件..." />
                <button type="button" aria-label="搜索"><Icon name="search" /></button>
              </SearchRow>
              <ComponentTree />
            </ListPanel>
            <Editor>
              <TabStrip><Tab>属性编辑</Tab></TabStrip>
              <SheetFrame>
                <Sheet>
                  <colgroup>
                    <Col $w={22} />
                    <Col $w={191} />
                    <Col $w={126} />
                    <Col $w={31} />
                  </colgroup>
                  <thead>
                    <tr>
                      <th aria-label="序号" />
                      <th>属性名称</th>
                      <th className="value">属性值</th>
                      <th>附加</th>
                    </tr>
                  </thead>
                  <tbody>
                    {props.map(({ name, value, tone = "", check }, i) => (
                      <tr key={name}>
                        <RowHead scope="row" $on={tone === "on"}>{i + 1}</RowHead>
                        <NameCell $tone={tone}>
                          {tone === "group" && (
                            <Expand aria-label="展开">
                              <svg width="7" height="7" viewBox="0 0 7 7"><path d="M0 3.500h7M3.500 0v7" stroke="#000" /></svg>
                            </Expand>
                          )}
                          {name}
                        </NameCell>
                        <ValueCell $tone={tone}>{value}</ValueCell>
                        <td>{check && <Check type="checkbox" aria-label={`${name} 附加`} />}</td>
                      </tr>
                    ))}
                  </tbody>
                </Sheet>
                <Mark $x={-13} $y={127} $w={349} $h={55} />
              </SheetFrame>
            </Editor>
          </WorkBody>
        </Work>
      </Body>

      <StatusBar>
        <StatusCell $w={148} />
        <StatusCell $w={77}>层高:2.15m</StatusCell>
        <StatusCell $w={97}>底标高:-2.2m</StatusCell>
        <StatusCell $w={47}>0</StatusCell>
        <StatusCell>在选择板/筏板底筋遇到此独立基础时，选择"全部扣减"根据节点设置锚入此独立基础，选择"不扣减"贯通布置，选择"隔一扣一"则断一根，贯通布置一根。</StatusCell>
        <StatusCell $w={69}>595.5 FPS</StatusCell>
      </StatusBar>

      <Taskbar>
        <Start aria-label="开始">
          <svg width="16" height="16" viewBox="0 0 16 16"><path d="M0 2.300 6.500 1.400v6.100H0zM7.500 1.200 16 0v7.500H7.500zM0 8.500h6.500v6.100L0 13.700zM7.500 8.500H16V16l-8.500-1.200z" fill="#fff" /></svg>
        </Start>
        <Cortana>
          <svg width="22" height="22" viewBox="0 0 22 22" fill="none"><circle cx="11" cy="11" r="9" stroke="#111" strokeWidth="2.600" /></svg>
          <input aria-label="搜索" placeholder="在这里输入你要搜索的内容" />
          <svg width="16" height="18" viewBox="0 0 16 18" fill="none"><path d="M5.500 1.500h5v10h-5zM3 8v5.500h10V8M8 13.500v3M5 16.500h6" stroke="#333" strokeWidth="1.200" /></svg>
        </Cortana>
        <TaskButton $w={48} aria-label="任务视图">
          <svg width="18" height="18" viewBox="0 0 18 18" fill="none"><path d="M1.500 1v2.500h9.500V1M1.500 6.500h9.500v5h-9.500zM1.500 17v-2.500h9.500V17M15.500 1v3M15.500 8.500V17" stroke="#fff" strokeWidth="1.200" /><path d="M14 5h3v3h-3z" fill="#fff" /></svg>
        </TaskButton>
        <TaskButton $w={52} aria-label="小工具">
          <svg width="22" height="22" viewBox="0 0 22 22" fill="#e9ecf0">
            <path d="M10.500 10.500Q1 10 .800 6 1 1 6.500.800 10 1 10.500 3zM11.500 10.500Q12 1 16 .800 21 1 21.200 6.500 21 10 19 10.500zM11.500 11.500q9.500.5 9.700 4.500-.2 5-5.700 5.200-3.500-.2-4-2.200zM10.500 11.500Q10 21 6 21.200 1 21 .800 15.500 1 12 3 11.500z" />
            <path d="M6 5.500q4 0 5 5.500M16.500 6q0 4-5.500 5M16 16.500q-4 0-5-5.500M5.500 16q0-4 5.500-5" stroke="#06171d" fill="none" />
          </svg>
        </TaskButton>
        <WebSearch>
          <IeMark size={18} ring="#4db1f5" tone="#2a8fe6" />
          <input aria-label="搜索网页和文件" placeholder="搜索网页和文件" />
          <svg width="18" height="18" viewBox="0 0 18 18" fill="none"><circle cx="8" cy="8" r="6.500" stroke="#b5b5b5" strokeWidth="1.200" /><path d="m12.500 12.500 4 4.500" stroke="#b5b5b5" strokeWidth="1.200" /></svg>
        </WebSearch>
        <TaskButton $w={50} aria-label="提醒">
          <svg width="28" height="28" viewBox="0 0 28 28" fill="none">
            <path d="M13 15.500q.5 2-2 2t-2.500-3 4-3 4 4-2 6-8-1.500-1.500-8.500 7-2.500M3 13q-2 7 4 10.500T18 19M5 10q3-4 9-3" stroke="#d8dde0" strokeWidth="1.300" />
            <path d="M15 12l2-2.500V6q0-4 4-4.500 4 .5 4 4.500v3.500l2 2.500zM19.500 12.500h3v2h-3z" fill="#e8b010" />
          </svg>
        </TaskButton>
        <TaskButton $w={42} aria-label="Internet Explorer"><IeMark size={24} /></TaskButton>
        <TaskButton $w={40} aria-label="文件资源管理器">
          <svg width="22" height="20" viewBox="0 0 22 20"><path d="M0 1h8l2 2h12v15H0z" fill="#f5d476" /><path d="M0 5h22v13H0z" fill="#fbe199" /><path d="M4 19v-8h14v8h-4v-4H8v4z" fill="#35a6e6" /></svg>
        </TaskButton>
        <TaskButton $w={42} $state="running" aria-label="360浏览器">
          <svg width="24" height="24" viewBox="0 0 24 24" fill="none"><circle cx="12" cy="12" r="10.500" fill="#fff" /><circle cx="12" cy="12" r="9" fill="#58c02c" /><path d="M16.500 15q-1.500 2.500-5 2.300Q7 17 7 12.500q.3-5 5-5t4.700 5H8" stroke="#fff" strokeWidth="2.400" /><path d="M2 19Q8 6 21 3" stroke="#2f9420" strokeWidth="1.500" /></svg>
        </TaskButton>
        <TaskButton $w={42} aria-label="邮件">
          <svg width="24" height="20" viewBox="0 0 24 20"><path d="M0 6 12 0l12 6v13H0z" fill="#fff" /><path d="M1 6h22l-9 5 3 4-8-5z" fill="#06171d" /></svg>
        </TaskButton>
        <TaskButton $w={40} aria-label="Edge">
          <svg width="22" height="22" viewBox="0 0 22 22"><path d="M1 9.500Q2.500 1 11.500 1 21 1.500 21 11v2H8q.5 4.500 5.500 4.500 3.500 0 6-1.500v4Q16.500 22 12 22 4 21.500 3.500 14q0-5 5-7.500-1.500 1-1.500 3h7.500q0-4-4.500-4-5 0-9 4z" fill="#0f7bdc" /></svg>
        </TaskButton>
        <TaskButton $w={39} $state="running" aria-label="广联达">
          <svg width="24" height="24" viewBox="0 0 24 24" fill="none">
            <path d="M22 1q0 6-5 7-4-2-7 0-4 3-2 7 3 4 7 1l1-2h-4v-3h9q2 6-2 9-6 4-12 1-6-4-5-11Q4 2 12 2q5 1 10-1z" fill="#22aef5" />
          </svg>
        </TaskButton>
        <TaskButton $w={40} $state="active" aria-label="钢筋算量"><Icon name="fork" size={24} /></TaskButton>
        <TaskScroll>
          <button aria-label="上一页"><Chevron dir="up" /></button>
          <button aria-label="下一页"><Chevron /></button>
        </TaskScroll>
        <TaskButton $w={38} aria-label="人脉">
          <svg width="16" height="16" viewBox="0 0 16 16" fill="none" stroke="#fff" strokeWidth="1.200"><circle cx="10.500" cy="3.500" r="2.500" /><circle cx="5" cy="7.500" r="2.300" /><path d="M1 14.500q0-4.500 4-4.500 3 0 3.500 3M8 7q5.500-2 6.500 4" /></svg>
        </TaskButton>
        <TaskButton $w={32} aria-label="显示隐藏的图标">
          <svg width="12" height="8" viewBox="0 0 12 8" fill="none"><path d="m1 7 5-5 5 5" stroke="#fff" strokeWidth="1.200" /></svg>
        </TaskButton>
        <TaskButton $w={20} aria-label="电源">
          <svg width="16" height="14" viewBox="0 0 16 14" fill="none" stroke="#fff"><path d="M6.500 4.500h8v7h-9v-3M15.500 6.500v3M1.500 1v3M4.500 1v3M.500 4.500h5v2l-1.500 1.500H2L.500 6.500zM3 8v4" /></svg>
        </TaskButton>
        <TaskButton $w={28} aria-label="网络">
          <svg width="14" height="14" viewBox="0 0 14 14" fill="none" stroke="#fff"><path d="M1 12Q2 2 13 1.500M4 12.500Q5 5.500 13 5M7 12.500q1-4 6-4" /><circle cx="11.500" cy="12" r="1" fill="#fff" /></svg>
        </TaskButton>
        <TaskButton $w={18} aria-label="音量">
          <svg width="17" height="14" viewBox="0 0 17 14" fill="none" stroke="#fff"><path d="M1 4.500h2.500l3-3v11l-3-3H1zM9 4.500q1.500 2.500 0 5M11.500 3q2.500 4 0 8M14 1.500q3.500 5.500 0 11" /></svg>
        </TaskButton>
        <TaskButton $w={36} aria-label="触摸键盘">
          <svg width="23" height="14" viewBox="0 0 23 14" fill="none" stroke="#fff"><path d="M.500.500h22v12H.500z" /><path d="M3 3.500h17M3 6.500h17" strokeDasharray="1.500 1.500" /><path d="M3 9.500h2M7 9.500h9M18 9.500h2" /></svg>
        </TaskButton>
        <TaskButton $w={20}>中</TaskButton>
        <TaskButton $w={36} aria-label="搜狗输入法"><Sogou size={16} /></TaskButton>
        <Clock>8:43<br />2018/11/1</Clock>
        <TaskButton $w={24} aria-label="通知">
          <svg width="24" height="26" viewBox="0 0 24 26">
            <path d="M0 3h16v12H7l-3 3v-3H0z" fill="#fff" />
            <path d="M3 6.500h10M3 9h10M3 11.500h7" stroke="#0a1a1f" />
            <circle cx="15.500" cy="17" r="8" fill="#333a3e" stroke="#888" />
            <text x="15.500" y="21.500" fontSize="12" fontWeight="700" fill="#fff" textAnchor="middle">2</text>
          </svg>
        </TaskButton>
        <ShowDesktop aria-label="显示桌面" />
      </Taskbar>

      <Ball>79</Ball>
      <ImeBar>
        <Sogou size={28} />
        <svg width="16" height="16" viewBox="0 0 16 16" fill="none" stroke="#1f74c4" strokeWidth="2"><path d="M2 4.500h12v5.500H2zM8 1v14.500" /></svg>
        <svg width="16" height="16" viewBox="0 0 16 16" fill="none"><circle cx="4" cy="5" r="2" stroke="#1f74c4" strokeWidth="1.400" /><path d="M9 9h3.500q.5 4-3 5 1.500-1.500 1-2.500H9z" fill="#1f74c4" /></svg>
        <svg width="16" height="16" viewBox="0 0 16 16" fill="none"><circle cx="8" cy="8" r="7" stroke="#1f74c4" strokeWidth="1.600" /><path d="M5.500 4.500v3M10.500 4.500v3M4.500 10q3.500 3.500 7 0" stroke="#1f74c4" strokeWidth="1.400" /></svg>
        <svg width="16" height="16" viewBox="0 0 16 16" fill="none"><rect x="5" y=".5" width="6" height="10" rx="3" fill="#1f74c4" /><path d="M2.500 6.500q0 6 5.500 6t5.500-6M8 12.500V16M5 15.300h6" stroke="#1f74c4" strokeWidth="1.500" /></svg>
        <svg width="17" height="16" viewBox="0 0 17 16"><path d="M0 2h17v12H0z" fill="#1f74c4" /><path d="M2 5h13M2 8h13" stroke="#fff" strokeWidth="1.400" strokeDasharray="2 1.200" /><path d="M4 11.200h9" stroke="#fff" strokeWidth="1.400" /></svg>
        <svg width="17" height="16" viewBox="0 0 17 16"><circle cx="6" cy="4.500" r="3.500" fill="#b5c2d6" /><path d="M0 14q0-6 6-6l3 1v5z" fill="#b5c2d6" /><path d="M7 8.500h10v7H7z" fill="#b5c2d6" /><path d="M8.500 10.500h2.500v1.500H9v2h2.500M15.500 10.500H13V14h2.500v-2H13" stroke="#fff" fill="none" /></svg>
        <svg width="16" height="16" viewBox="0 0 16 16"><path d="M5 2q3 2.500 6 0l4.500 2L14 8l-2-.5V15H4V7.500L2 8 .500 4z" fill="#1f74c4" /></svg>
        <svg width="16" height="16" viewBox="0 0 16 16"><path d="M1 13 8 7q-1-4 3-6l1.500.3L10.500 4l1.500 2 3-1.500q.5 4.500-4.500 5.500L4 15.500Q1 16 1 13z" fill="#1f74c4" /></svg>
      </ImeBar>
    </Shell>
  );
}
